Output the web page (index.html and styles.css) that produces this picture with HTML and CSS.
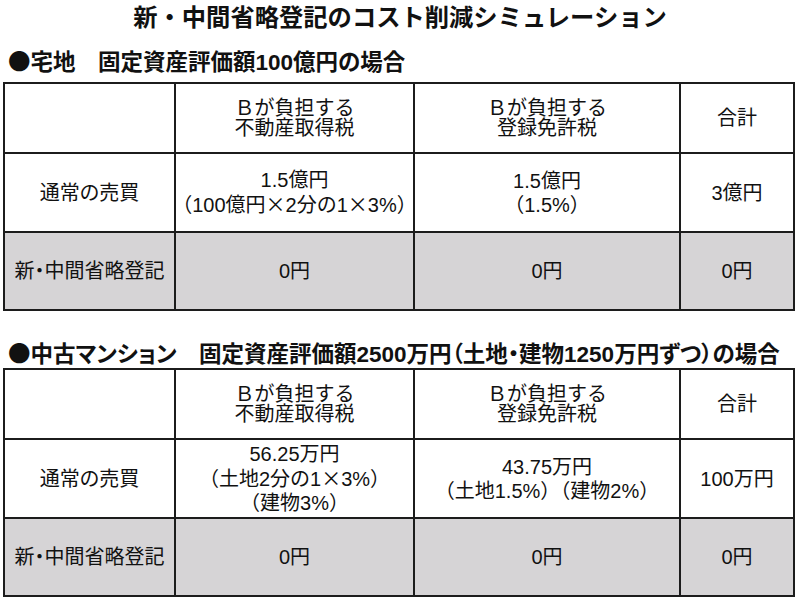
FILE: index.html
```html
<!DOCTYPE html>
<html lang="ja">
<head>
<meta charset="utf-8">
<title>新・中間省略登記のコスト削減シミュレーション</title>
<link rel="stylesheet" href="styles.css">
</head>
<body>
<h1 class="title">新・中間省略登記のコスト削減シミュレーション</h1>

<h2 class="section section-first"><span class="cj">●</span>宅地　固定資産評価額100億円の場合</h2>
<div class="grid">
  <div class="cell head"></div>
  <div class="cell head"><span class="txt">Ｂが負担する<br>不動産取得税</span></div>
  <div class="cell head"><span class="txt">Ｂが負担する<br>登録免許税</span></div>
  <div class="cell head"><span class="txt">合計</span></div>

  <div class="cell body label"><span class="txt">通常の売買</span></div>
  <div class="cell body"><span class="txt">1.5億円<br>（100億円<span class="cj">×</span>2分の1<span class="cj">×</span>3%）</span></div>
  <div class="cell body"><span class="txt">1.5億円<br>（1.5%）</span></div>
  <div class="cell body"><span class="txt">3億円</span></div>

  <div class="cell body label grey"><span class="txt">新・中間省略登記</span></div>
  <div class="cell body grey"><span class="txt">0円</span></div>
  <div class="cell body grey"><span class="txt">0円</span></div>
  <div class="cell body grey"><span class="txt">0円</span></div>
</div>

<h2 class="section section-second"><span class="cj">●</span>中古マンション　固定資産評価額2500万円（土地・建物1250万円ずつ）の場合</h2>
<div class="grid">
  <div class="cell head"></div>
  <div class="cell head"><span class="txt">Ｂが負担する<br>不動産取得税</span></div>
  <div class="cell head"><span class="txt">Ｂが負担する<br>登録免許税</span></div>
  <div class="cell head"><span class="txt">合計</span></div>

  <div class="cell body label"><span class="txt">通常の売買</span></div>
  <div class="cell body"><span class="txt">56.25万円<br>（土地2分の1<span class="cj">×</span>3%）<br>（建物3%）</span></div>
  <div class="cell body"><span class="txt">43.75万円<br>（土地1.5%）（建物2%）</span></div>
  <div class="cell body"><span class="txt">100万円</span></div>

  <div class="cell body label grey"><span class="txt">新・中間省略登記</span></div>
  <div class="cell body grey"><span class="txt">0円</span></div>
  <div class="cell body grey"><span class="txt">0円</span></div>
  <div class="cell body grey"><span class="txt">0円</span></div>
</div>
</body>
</html>
```

FILE: styles.css
```css
html, body {
  margin: 0;
  padding: 0;
  background: #ffffff;
}

body {
  width: 800px;
  color: #111111;
  font-family: "Liberation Sans", "Noto Sans CJK JP", sans-serif;
}

.title {
  margin: 0;
  height: 36px;
  line-height: 36px;
  text-align: center;
  font-size: 24.3px;
  font-weight: bold;
}

.section {
  margin: 0;
  padding-left: 8px;
  height: 32px;
  line-height: 32px;
  font-size: 22.5px;
  font-weight: bold;
  white-space: nowrap;
  font-feature-settings: "palt";
}

.section-first {
  margin-top: 8px;
  margin-bottom: 6px;
}

.section-second {
  margin-top: 25px;
}

.grid {
  display: grid;
  grid-template-columns: 169px 237px 264px 112px;
  grid-template-rows: 68px 77px 76px;
  gap: 2px;
  padding: 2px;
  margin-left: 3px;
  width: 788px;
  background: #1c1c1c;
}

.cell {
  display: flex;
  align-items: center;
  justify-content: center;
  text-align: center;
  background: #ffffff;
  font-size: 20px;
  min-width: 0;
}

.txt {
  display: block;
  white-space: nowrap;
}

.head {
  line-height: 20px;
}

.body {
  line-height: 24px;
}

.label {
  font-feature-settings: "palt";
}

.grey {
  background: #d6d4d6;
}

.cj {
  font-family: "Noto Sans CJK JP", sans-serif;
}
```
